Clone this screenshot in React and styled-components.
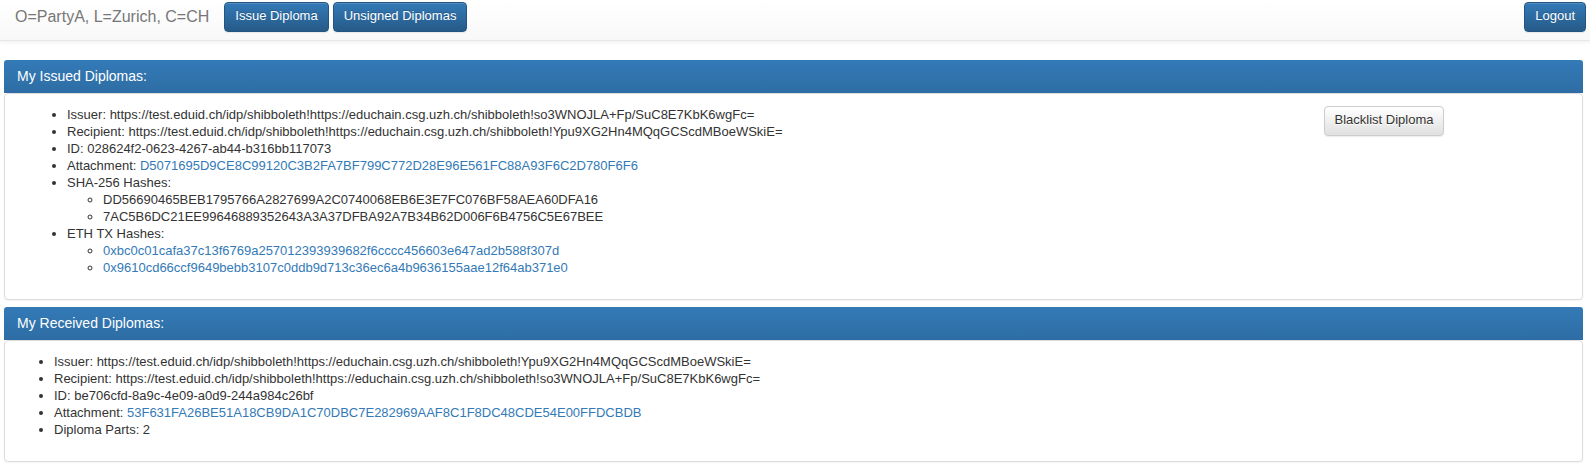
import React from "react";
import styled, { createGlobalStyle, css } from "styled-components";

const GlobalStyle = createGlobalStyle`
  *, *::before, *::after { box-sizing: border-box; }
  body {
    margin: 0;
    background: #fff;
    color: #333;
    font-family: "Helvetica Neue", Helvetica, Arial, "Liberation Sans", sans-serif;
    font-size: 13px;
    line-height: 17px;
  }
`;

const Navbar = styled.nav`
  display: flex;
  align-items: flex-start;
  gap: 4px;
  padding: 2px 4px 8px 15px;
  background: linear-gradient(to bottom, #fff 0%, #f8f8f8 100%);
  border-bottom: 1px solid #e7e7e7;
  box-shadow: inset 0 1px 0 rgba(255, 255, 255, 0.15), 0 1px 4px rgba(0, 0, 0, 0.075);
`;

const Brand = styled.span`
  margin-right: 11px;
  color: #777;
  font-size: 16px;
  line-height: 30px;
  white-space: nowrap;
`;

const variants = {
  primary: css`
    color: #fff;
    border-color: #245580;
    background: linear-gradient(to bottom, #337ab7 0%, #265a88 100%);
    text-shadow: 0 -1px 0 rgba(0, 0, 0, 0.2);
  `,
  plain: css`
    color: #333;
    border-color: #ccc;
    background: linear-gradient(to bottom, #fff 0%, #e0e0e0 100%);
    text-shadow: 0 1px 0 #fff;
  `,
};

const Button = styled.button`
  height: 30px;
  padding: 0 10px 3px;
  border: 1px solid;
  border-radius: 4px;
  box-shadow: inset 0 1px 0 rgba(255, 255, 255, 0.15), 0 1px 1px rgba(0, 0, 0, 0.075);
  font: inherit;
  white-space: nowrap;
  cursor: pointer;
  ${({ $variant }) => variants[$variant]}
`;

const NavEnd = styled.div`
  margin-left: auto;
`;

const Main = styled.main`
  display: flex;
  flex-direction: column;
  gap: 7px;
  padding: 19px 7px 4px 4px;
`;

const Heading = styled.h2`
  margin: 0;
  padding: 8px 13px;
  border-radius: 3px 3px 0 0;
  background: linear-gradient(to bottom, #337ab7 0%, #2e6da4 100%);
  color: #fff;
  font-size: 14px;
  font-weight: 400;
  line-height: 17px;
`;

const Body = styled.div`
  padding: 12px 13px 14px;
  border: 1px solid #ddd;
  border-radius: 4px;
  background: #fff;
  box-shadow: 0 1px 2px rgba(0, 0, 0, 0.05);
`;

const Row = styled.div`
  display: grid;
  grid-template-columns: 5fr 1fr;
`;

const Column = styled.div`
  min-width: 0;
  padding: 0 13px;
`;

const List = styled.ul`
  margin: 0 0 9px;
  padding-left: 36px;

  & & {
    margin-bottom: 0;
  }
`;

const Link = styled.a`
  color: #337ab7;
  text-decoration: none;
`;

const sha = [
  "DD56690465BEB1795766A2827699A2C0740068EB6E3E7FC076BF58AEA60DFA16",
  "7AC5B6DC21EE99646889352643A3A37DFBA92A7B34B62D006F6B4756C5E67BEE",
];

const transactions = [
  "0xbc0c01cafa37c13f6769a257012393939682f6cccc456603e647ad2b588f307d",
  "0x9610cd66ccf9649bebb3107c0ddb9d713c36ec6a4b9636155aae12f64ab371e0",
];

function DiplomaList({ issuer, recipient, id, attachment, children }) {
  return (
    <List>
      <li>Issuer: {issuer}</li>
      <li>Recipient: {recipient}</li>
      <li>ID: {id}</li>
      <li>
        Attachment: <Link href="#attachment">{attachment}</Link>
      </li>
      {children}
    </List>
  );
}

const accountA =
  "https://test.eduid.ch/idp/shibboleth!https://educhain.csg.uzh.ch/shibboleth!so3WNOJLA+Fp/SuC8E7KbK6wgFc=";
const accountB =
  "https://test.eduid.ch/idp/shibboleth!https://educhain.csg.uzh.ch/shibboleth!Ypu9XG2Hn4MQqGCScdMBoeWSkiE=";

export default function App() {
  return (
    <>
      <GlobalStyle />
      <Navbar>
        <Brand>O=PartyA, L=Zurich, C=CH</Brand>
        <Button $variant="primary">Issue Diploma</Button>
        <Button $variant="primary">Unsigned Diplomas</Button>
        <NavEnd>
          <Button $variant="primary">Logout</Button>
        </NavEnd>
      </Navbar>
      <Main>
        <section>
          <Heading>My Issued Diplomas:</Heading>
          <Body>
            <Row>
              <Column>
                <DiplomaList
                  issuer={accountA}
                  recipient={accountB}
                  id="028624f2-0623-4267-ab44-b316bb117073"
                  attachment="D5071695D9CE8C99120C3B2FA7BF799C772D28E96E561FC88A93F6C2D780F6F6"
                >
                  <li>
                    SHA-256 Hashes:
                    <List>
                      {sha.map((hash) => (
                        <li key={hash}>{hash}</li>
                      ))}
                    </List>
                  </li>
                  <li>
                    ETH TX Hashes:
                    <List>
                      {transactions.map((hash) => (
                        <li key={hash}>
                          <Link href={`#${hash}`}>{hash}</Link>
                        </li>
                      ))}
                    </List>
                  </li>
                </DiplomaList>
              </Column>
              <Column>
                <Button $variant="plain">Blacklist Diploma</Button>
              </Column>
            </Row>
          </Body>
        </section>
        <section>
          <Heading>My Received Diplomas:</Heading>
          <Body>
            <DiplomaList
              issuer={accountB}
              recipient={accountA}
              id="be706cfd-8a9c-4e09-a0d9-244a984c26bf"
              attachment="53F631FA26BE51A18CB9DA1C70DBC7E282969AAF8C1F8DC48CDE54E00FFDCBDB"
            >
              <li>Diploma Parts: 2</li>
            </DiplomaList>
          </Body>
        </section>
      </Main>
    </>
  );
}
